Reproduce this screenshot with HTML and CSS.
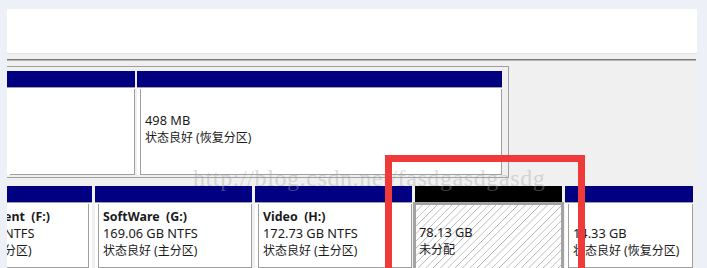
FILE: index.html
```html
<!DOCTYPE html>
<html>
<head>
<meta charset="utf-8">
<link rel="stylesheet" href="styles.css">
</head>
<body>
<div class="screen">
  <div class="topband"></div>
  <div class="frame">
    <div class="side side-left"></div>
    <div class="content">
      <div class="listpane"></div>
      <div class="splitter"></div>
      <div class="disk disk1">
        <div class="part p-a">
          <div class="phead"></div>
          <div class="pbody"><div class="pinner"></div></div>
        </div>
        <div class="part p-rec1">
          <div class="phead"></div>
          <div class="pbody"><div class="pinner">
            <div class="line">&nbsp;</div>
            <div class="line lat">498 MB</div>
            <div class="line">状态良好 (恢复分区)</div>
          </div></div>
        </div>
      </div>
      <div class="disk disk2">
        <div class="part p-f">
          <div class="phead"></div>
          <div class="pbody"><div class="pinner shifted">
            <div class="line b">ent&nbsp;&nbsp;(F:)</div>
            <div class="line lat">NTFS</div>
            <div class="line">分区)</div>
          </div></div>
        </div>
        <div class="part p-g">
          <div class="phead"></div>
          <div class="pbody"><div class="pinner">
            <div class="line b">SoftWare&nbsp;&nbsp;(G:)</div>
            <div class="line lat">169.06 GB NTFS</div>
            <div class="line">状态良好 (主分区)</div>
          </div></div>
        </div>
        <div class="part p-h">
          <div class="phead"></div>
          <div class="pbody"><div class="pinner">
            <div class="line b">Video&nbsp;&nbsp;(H:)</div>
            <div class="line lat">172.73 GB NTFS</div>
            <div class="line">状态良好 (主分区)</div>
          </div></div>
        </div>
        <div class="part p-un">
          <div class="phead black"></div>
          <div class="pbody sel"><div class="pinner hatch">
            <div class="line">&nbsp;</div>
            <div class="line lat">78.13 GB</div>
            <div class="line">未分配</div>
          </div></div>
        </div>
        <div class="part p-rec2">
          <div class="phead"></div>
          <div class="pbody"><div class="pinner">
            <div class="line">&nbsp;</div>
            <div class="line lat">14.33 GB</div>
            <div class="line">状态良好 (恢复分区)</div>
          </div></div>
        </div>
      </div>
    </div>
    <div class="side side-right"></div>
  </div>
  <div class="watermark">http://blog.csdn.net/fasdgasdgasdg</div>
  <div class="redbox"></div>
</div>
</body>
</html>
```

FILE: styles.css
```css
html, body {
  margin: 0;
  padding: 0;
}
body {
  width: 707px;
  height: 268px;
  overflow: hidden;
  font-family: "Noto Sans", "Noto Sans CJK SC", sans-serif;
  font-size: 12px;
  color: #1a1a1a;
}
.screen {
  position: relative;
  width: 707px;
  height: 268px;
  overflow: hidden;
  background: #edf1f7;
}
.topband {
  height: 9px;
  background: #edf1f7;
}
.frame {
  display: flex;
  height: 259px;
}
.side-left {
  width: 7px;
  background: #edf1f7;
}
.side-right {
  width: 10px;
  background: #edf1f7;
}
.content {
  width: 690px;
  background: #f0f0f0;
  display: flex;
  flex-direction: column;
}
.listpane {
  height: 44px;
  background: #fff;
  border-bottom: 1px solid #e4e4e4;
}
.splitter {
  margin-top: 5px;
  height: 1px;
  border-top: 1px solid #7a7a7a;
  background: #b4b4b4;
  margin-right: 1px;
}
.disk {
  display: flex;
}
.disk1 {
  margin-top: 5px;
  width: 498px;
  height: 105px;
  border: 1px solid #a0a0a0;
  border-left: none;
  padding: 4px 3px 2px 0;
}
.disk2 {
  margin-top: 8px;
  height: 83px;
  gap: 3px;
}
.part {
  display: flex;
  flex-direction: column;
}
.phead {
  height: 16px;
  background: #000080;
  flex: none;
}
.phead.black {
  background: #000;
}
.pbody {
  flex: 1;
  background: #fff;
  border-top: 1px solid #a0a0a0;
  padding: 1px 0 0 3px;
  display: flex;
}
.pinner {
  flex: 1;
  border-left: 1px solid #a0a0a0;
  border-right: 1px solid #a0a0a0;
  border-bottom: 1px solid #a0a0a0;
  padding: 4px 0 0 4px;
  white-space: nowrap;
  overflow: hidden;
}
.disk1 .pinner {
  padding-top: 6px;
}
.line {
  height: 17px;
  line-height: 17px;
}
.lat {
  font-size: 12.8px;
}
.b {
  font-weight: bold;
  font-size: 12.4px;
}
.p-a {
  width: 128px;
  margin-right: 2px;
}
.p-a .pinner {
  border-left: none;
}
.p-rec1 {
  width: 365px;
}
.p-f {
  width: 85px;
}
.p-f .pbody {
  padding-left: 0;
  padding-right: 3px;
}
.p-f .pinner {
  border-left: none;
  padding-left: 0;
}
.shifted .line {
  margin-left: -3px;
}
.p-g {
  width: 157px;
}
.p-h {
  width: 157px;
}
.p-un {
  width: 147px;
}
.pbody.sel {
  border: 3px solid #a3a3a3;
  border-bottom: none;
  padding: 0;
  margin: 0 -2px;
}
.pinner.hatch {
  border: none;
  padding-left: 3px;
  padding-top: 2px;
  background: repeating-linear-gradient(135deg, #ffffff 0px, #ffffff 4px, #b0b0b0 4.5px, #ffffff 5.2px);
}
.p-rec2 {
  width: 128px;
}
.watermark {
  position: absolute;
  left: 193px;
  top: 165px;
  font-family: "Liberation Serif", serif;
  font-size: 24px;
  letter-spacing: 0.6px;
  color: rgba(165, 165, 165, 0.4);
  white-space: nowrap;
}
.redbox {
  position: absolute;
  left: 385px;
  top: 155px;
  width: 186px;
  height: 140px;
  border: 7px solid #f03a3a;
}
```
